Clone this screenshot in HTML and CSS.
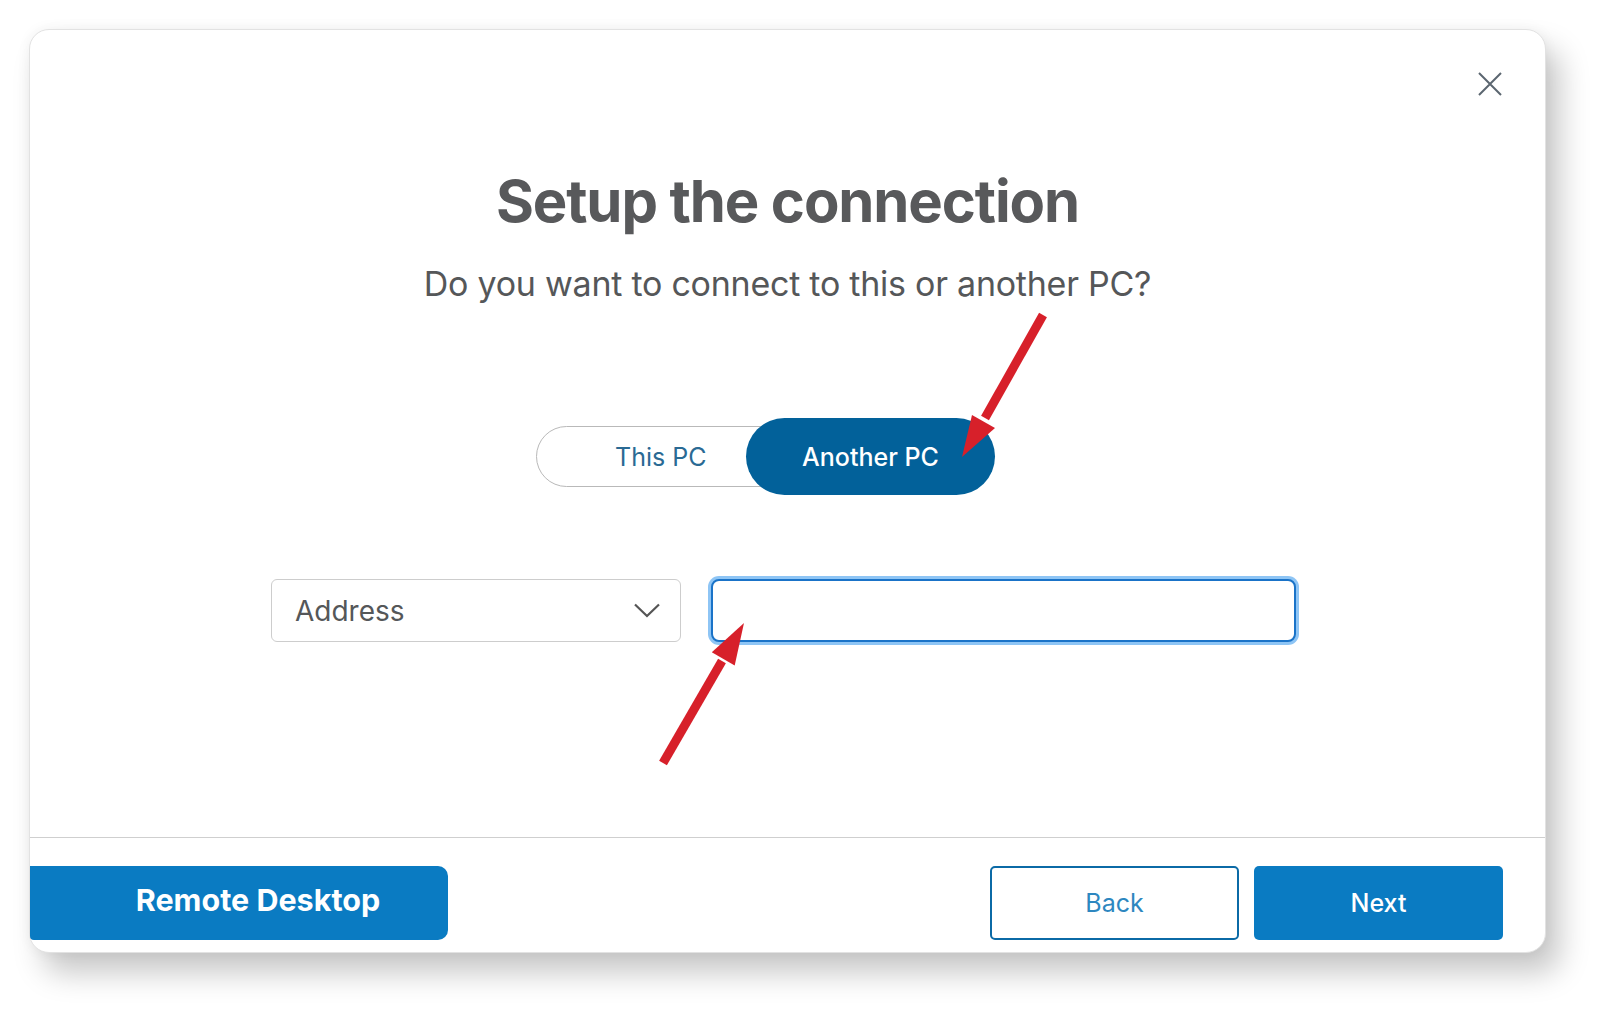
FILE: index.html
```html
<!DOCTYPE html>
<html lang="en">
<head>
  <meta charset="UTF-8" />
  <meta name="viewport" content="width=device-width, initial-scale=1.0"/>
  <title>Setup the connection</title>
  <link rel="stylesheet" href="styles.css">
</head>
<body>
  <div class="dialog">
    <button class="close" aria-label="Close">
      <svg width="24" height="24" viewBox="0 0 24 24"><path d="M1 1 L23 23 M23 1 L1 23" stroke="#5b6670" stroke-width="2" fill="none"/></svg>
    </button>

    <div class="dialog-body">
      <h1 class="title">Setup the connection</h1>
      <p class="subtitle">Do you want to connect to this or another PC?</p>

      <div class="toggle-row">
        <div class="toggle">
          <button class="opt opt-this">This PC</button>
          <button class="opt opt-another">Another PC</button>
        </div>
      </div>

      <div class="address-row">
        <div class="select">
          <span>Address</span>
          <svg width="26" height="15" viewBox="0 0 26 15"><polyline points="1,1.5 13,13 25,1.5" stroke="#555" stroke-width="2.2" fill="none"/></svg>
        </div>
        <input type="text" class="address-input" />
      </div>
    </div>

    <div class="dialog-footer">
      <button class="btn-rd">Remote Desktop</button>
      <div class="nav-buttons">
        <button class="btn btn-back">Back</button>
        <button class="btn btn-next">Next</button>
      </div>
    </div>

    <!-- annotation arrows -->
    <svg class="arrows" width="1517" height="924" viewBox="0 0 1517 924">
      <line x1="1014" y1="286" x2="956" y2="389" stroke="#d7202a" stroke-width="9"/>
      <polygon points="933,428 966,399 943,386" fill="#d7202a"/>
      <line x1="634" y1="734" x2="693" y2="632" stroke="#d7202a" stroke-width="9"/>
      <polygon points="715,594 705.7,636.5 682.8,623.3" fill="#d7202a"/>
    </svg>
  </div>
</body>
</html>
```

FILE: styles.css
```css
html, body {
  height: 100%;
}
body {
  margin: 0;
  padding: 29px 0 0 29px;
  box-sizing: border-box;
  min-height: 1009px;
  background: #fff;
  font-family: "Inter", "Noto Sans", sans-serif;
}
.dialog {
  position: relative;
  width: 1515px;
  height: 922px;
  background: #fff;
  border: 1px solid #e2e2e2;
  border-radius: 20px;
  box-shadow: 14px 20px 30px rgba(0,0,0,0.22), 0 0 14px rgba(0,0,0,0.05);
  display: flex;
  flex-direction: column;
}
.close {
  position: absolute;
  top: 42px;
  right: 43px;
  padding: 0;
  border: none;
  background: none;
  width: 24px;
  height: 24px;
}
.dialog-body {
  flex: 1;
  display: flex;
  flex-direction: column;
  align-items: center;
  padding-top: 136px;
  border-bottom: 1px solid #cfcfcf;
}
.title {
  margin: 0;
  font-size: 58px;
  line-height: 70px;
  font-weight: 700;
  letter-spacing: -1.1px;
  color: #58595b;
}
.subtitle {
  margin: 28px 0 0;
  font-size: 34px;
  line-height: 40px;
  letter-spacing: -0.25px;
  color: #555759;
}
.toggle-row {
  margin-top: 114px;
  padding-right: 44px;
}
.toggle {
  display: flex;
  align-items: center;
}
.opt {
  font-family: inherit;
  font-size: 25px;
  border-radius: 40px;
  cursor: pointer;
}
.opt-this {
  width: 255px;
  height: 61px;
  border: 1px solid #b9b9b9;
  background: #fff;
  color: #2a6a94;
  text-align: left;
  padding: 0 0 0 78px;
}
.opt-another {
  position: relative;
  width: 249px;
  height: 77px;
  margin-left: -45px;
  border: none;
  background: #02619a;
  color: #fff;
  font-weight: 500;
}
.address-row {
  display: flex;
  gap: 30px;
  margin-top: 84px;
  padding-right: 8px;
}
.select {
  display: flex;
  align-items: center;
  justify-content: space-between;
  box-sizing: border-box;
  width: 410px;
  height: 63px;
  padding: 0 20px 0 23px;
  border: 1px solid #cdcdcd;
  border-radius: 6px;
  font-size: 28px;
  color: #555759;
}
.address-input {
  width: 585px;
  height: 63px;
  box-sizing: border-box;
  border: 2px solid #1a73c8;
  border-radius: 8px;
  box-shadow: 0 0 0 3px #8ec5f5;
  outline: none;
  font-size: 26px;
}
.dialog-footer {
  display: flex;
  justify-content: space-between;
  align-items: center;
  padding: 28px 42px 12px 0;
}
.btn-rd {
  width: 418px;
  height: 74px;
  border: none;
  border-radius: 0 10px 10px 4px;
  background: #0a7bc2;
  color: #fff;
  font-family: inherit;
  font-size: 30.5px;
  font-weight: 700;
  padding: 0 0 7px 38px;
}
.nav-buttons {
  display: flex;
  gap: 15px;
}
.btn {
  width: 249px;
  height: 74px;
  border-radius: 5px;
  font-family: inherit;
  font-size: 25px;
}
.btn-back {
  background: #fff;
  border: 2px solid #0b6aa6;
  color: #2d87c0;
}
.btn-next {
  background: #0a7bc2;
  border: none;
  color: #fff;
  font-weight: 500;
}
.arrows {
  position: absolute;
  top: -1px;
  left: -1px;
  pointer-events: none;
}
```
